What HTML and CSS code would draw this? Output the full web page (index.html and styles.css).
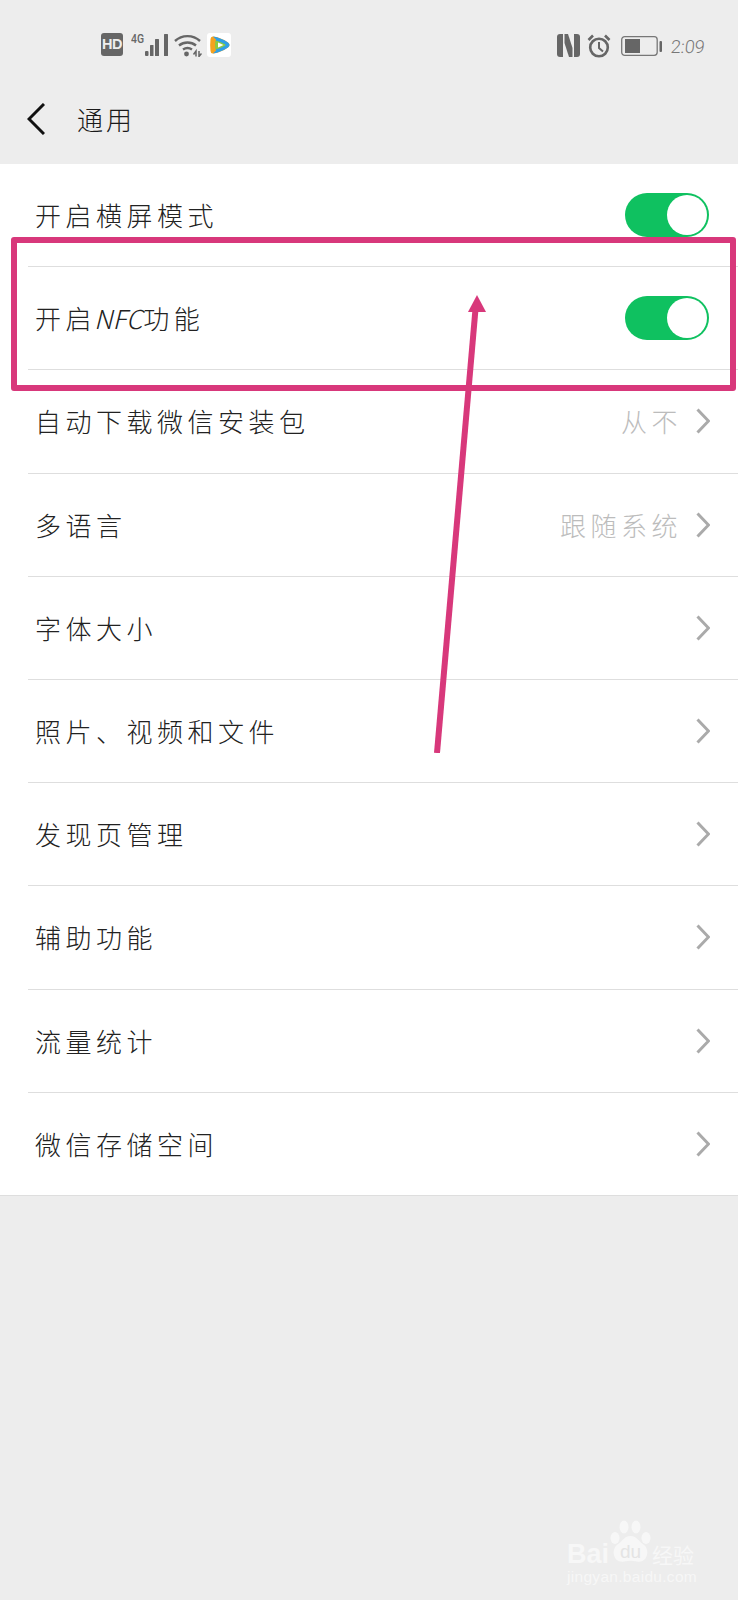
FILE: index.html
```html
<!DOCTYPE html>
<html lang="zh">
<head>
<meta charset="utf-8">
<title>通用</title>
<link rel="stylesheet" href="styles.css">
</head>
<body>
<div class="screen">
  <header class="status">
    <div class="status-left">
      <span class="hd">HD</span>
      <span class="net">4G</span>
      <svg class="ic-signal" width="24" height="23" viewBox="0 0 24 23"><g fill="#666"><rect x="0" y="17" width="3.500" height="5" rx="1"/><rect x="5" y="11" width="3.500" height="11" rx=".5"/><rect x="10" y="5" width="4" height="17" rx=".5"/><rect x="19" y="0" width="4" height="22" rx=".5"/></g></svg>
      <svg class="ic-wifi" width="28" height="23" viewBox="0 0 28 23"><g fill="none" stroke="#666" stroke-width="2.400"><path d="M1 7C8 .5 19 .5 26 7"/><path d="M5 11.500c5-4 12-4 17 0"/><path d="M9 15.500c3-2 6-2 9 0"/></g><circle cx="12.500" cy="20" r="2.400" fill="#666"/><path d="M19.500 20.500l2.500-3.500v5.500M25 17v5.500l2.500-3" fill="none" stroke="#666" stroke-width="1.500"/></svg>
      <svg class="ic-app" width="24" height="24" viewBox="0 0 24 24"><rect width="24" height="24" rx="3" fill="#fff"/><path d="M3.500 6q.2-3 3-2.500q8 1.300 14.500 6q3 2.500 0 5q-6.500 4.700-14.500 6q-2.800.5-3-2.500q-.7-6 0-12z" fill="#f4a21f"/><path d="M6 3.500q8 1.300 15 6q3 2.500 0 5q-7 4.700-15 6l3-3q-1-5.500 0-11z" fill="#2f9fe6"/><path d="M8.500 7.500q5 1.200 9 3.500q2 1 0 2q-4 2.300-9 3.500q-1-4.500 0-9z" fill="#8ccb3f"/><path d="M11 9.500l5.500 2.500-5.500 2.500z" fill="#fff"/></svg>
    </div>
    <div class="status-right">
      <svg class="ic-nfc" width="23" height="23" viewBox="0 0 23 23"><g fill="#666"><path d="M3 0h3v23H3q-3 0-3-3V3q0-3 3-3z"/><path d="M20 0h-3v23h3q3 0 3-3V3q0-3-3-3z"/><path d="M7.500 0h3.500l4.500 14v9H12L7.500 9z"/></g></svg>
      <svg class="ic-alarm" width="24" height="24" viewBox="0 0 24 24"><circle cx="12" cy="13.500" r="8.800" fill="none" stroke="#666" stroke-width="2.600"/><path d="M12 8v6l4 3.500" fill="none" stroke="#666" stroke-width="2"/><path d="M1.500 6L6 1.500M22.500 6L18 1.500" stroke="#666" stroke-width="2.600"/></svg>
      <svg class="ic-batt" width="41" height="20" viewBox="0 0 41 20"><rect x=".7" y=".7" width="35.500" height="18.600" rx="3" fill="none" stroke="#777" stroke-width="1.300"/><rect x="4" y="3" width="15" height="14" fill="#666"/><rect x="38.500" y="5" width="2.500" height="11" rx="1" fill="#666"/></svg>
      <span class="time">2:09</span>
    </div>
  </header>

  <nav class="nav">
    <svg class="back" width="18" height="32" viewBox="0 0 18 32"><path d="M17 1L2 16l15 15" fill="none" stroke="#111" stroke-width="3"/></svg>
    <h1 class="title">通用</h1>
  </nav>

  <ul class="list">
    <li class="row"><span class="label">开启横屏模式</span><span class="switch"><span class="knob"></span></span></li>
    <li class="row"><span class="label">开启<span class="latin">NFC</span>功能</span><span class="switch"><span class="knob"></span></span></li>
    <li class="row"><span class="label">自动下载微信安装包</span><span class="value">从不</span><svg class="chev" width="14" height="26" viewBox="0 0 14 26"><path d="M1.500 1.500L12.500 13 1.500 24.500" fill="none" stroke="#aaa" stroke-width="3"/></svg></li>
    <li class="row"><span class="label">多语言</span><span class="value">跟随系统</span><svg class="chev" width="14" height="26" viewBox="0 0 14 26"><path d="M1.500 1.500L12.500 13 1.500 24.500" fill="none" stroke="#aaa" stroke-width="3"/></svg></li>
    <li class="row"><span class="label">字体大小</span><svg class="chev" width="14" height="26" viewBox="0 0 14 26"><path d="M1.500 1.500L12.500 13 1.500 24.500" fill="none" stroke="#aaa" stroke-width="3"/></svg></li>
    <li class="row"><span class="label">照片、视频和文件</span><svg class="chev" width="14" height="26" viewBox="0 0 14 26"><path d="M1.500 1.500L12.500 13 1.500 24.500" fill="none" stroke="#aaa" stroke-width="3"/></svg></li>
    <li class="row"><span class="label">发现页管理</span><svg class="chev" width="14" height="26" viewBox="0 0 14 26"><path d="M1.500 1.500L12.500 13 1.500 24.500" fill="none" stroke="#aaa" stroke-width="3"/></svg></li>
    <li class="row"><span class="label">辅助功能</span><svg class="chev" width="14" height="26" viewBox="0 0 14 26"><path d="M1.500 1.500L12.500 13 1.500 24.500" fill="none" stroke="#aaa" stroke-width="3"/></svg></li>
    <li class="row"><span class="label">流量统计</span><svg class="chev" width="14" height="26" viewBox="0 0 14 26"><path d="M1.500 1.500L12.500 13 1.500 24.500" fill="none" stroke="#aaa" stroke-width="3"/></svg></li>
    <li class="row"><span class="label">微信存储空间</span><svg class="chev" width="14" height="26" viewBox="0 0 14 26"><path d="M1.500 1.500L12.500 13 1.500 24.500" fill="none" stroke="#aaa" stroke-width="3"/></svg></li>
  </ul>

  <div class="highlight"></div>
  <svg class="arrow" width="60" height="458" viewBox="0 0 60 458"><path d="M7 458L45.500 14" stroke="#d8387b" stroke-width="6" fill="none"/><path d="M47 0l9 17H38z" fill="#d8387b"/></svg>

  <div class="mark">
    <div class="mark-top">
      <span class="mark-bai">Bai</span>
      <span class="mark-du">
        <svg class="paw" width="42" height="46" viewBox="0 0 42 46"><g fill="#f7f7f7"><ellipse cx="5" cy="18" rx="4.500" ry="6"/><ellipse cx="14" cy="7" rx="4.500" ry="6.500"/><ellipse cx="26" cy="7" rx="4.500" ry="6.500"/><ellipse cx="36" cy="18" rx="4.500" ry="6"/><path d="M20.500 16c6 0 8 5 13 8.500 7 5 4 19-6.500 17-4-1-9-1-13 0C3.500 43.500 .5 29.500 7.500 24.500c5-3.500 7-8.500 13-8.500z"/></g></svg>
        <span class="mark-du-text">du</span>
      </span>
      <span class="mark-jy">经验</span>
    </div>
    <div class="mark-url">jingyan.baidu.com</div>
  </div>
</div>
</body>
</html>
```

FILE: styles.css
```css
* { box-sizing: border-box; }
html, body { margin: 0; padding: 0; }
body { background: #ededed; font-family: "Noto Sans CJK SC", "Noto Sans", sans-serif; }

.screen { position: relative; width: 738px; height: 1600px; overflow: hidden; background: #ededed; }

.status { height: 74px; padding: 33px 35px 0 101px; display: flex; justify-content: space-between; align-items: flex-start; }
.status-left, .status-right { display: flex; align-items: flex-start; }
.status svg { display: block; flex: none; }
.hd { width: 22px; height: 23px; border-radius: 3px; background: #666; color: #eee; font: 700 14.500px/23px "Liberation Sans", sans-serif; text-align: center; letter-spacing: -.5px; }
.net { width: 14px; margin-left: 8px; font: 500 13px/12px "Roboto", sans-serif; color: #666; transform: scaleX(.8); transform-origin: left top; white-space: nowrap; }
.ic-signal { margin: 1px 0 0 0; }
.ic-wifi { margin: 1px 0 0 5px; }
.ic-app { margin-left: 5px; }
.status-right { padding-top: 1px; }
.ic-alarm { margin-left: 7px; }
.ic-batt { margin: 2px 0 0 10px; }
.time { margin: 2px 0 0 9px; width: 32px; font: 300 18px/22px "Roboto", sans-serif; color: #777; white-space: nowrap; transform: skewX(-6deg); }

.nav { height: 90px; padding-left: 27px; display: flex; align-items: center; }
.back { display: block; }
.title { margin: 0 0 0 32px; font-size: 26px; font-weight: 300; line-height: 32px; letter-spacing: 3px; color: #1a1a1a; }

.list { margin: 0; padding: 0; list-style: none; background: #fff; }
.row { height: 103.2px; margin-left: 28px; padding: 0 28px 0 7px; display: flex; align-items: center; border-bottom: 1px solid #dedede; }
.row:last-child { margin-left: 0; padding-left: 35px; }
.label { flex: 1; font-size: 26px; font-weight: 300; letter-spacing: 4.500px; color: #222; line-height: 34px; }
.latin { font-style: italic; letter-spacing: 0; margin: 0 1px 0 -2px; }
.value { font-size: 26px; font-weight: 300; letter-spacing: 4.500px; color: #bcbcbc; line-height: 34px; margin-right: 14px; }
.chev { display: block; flex: none; }

.switch { width: 84px; height: 44px; border-radius: 22px; background: #0fc160; display: flex; justify-content: flex-end; align-items: center; padding-right: 2px; margin-right: 1px; }
.knob { width: 40px; height: 40px; border-radius: 50%; background: #fff; }

.highlight { position: absolute; left: 11px; top: 237px; width: 725px; height: 154px; border: 6px solid #d8387b; border-radius: 3px; }
.arrow { position: absolute; left: 430px; top: 295px; }

.mark { position: absolute; left: 567px; top: 1520px; width: 134px; color: #f7f7f7; font-family: "Liberation Sans", sans-serif; white-space: nowrap; }
.mark-top { display: flex; align-items: flex-end; height: 46px; }
.mark-bai { flex: none; width: 43px; font-size: 27px; line-height: 24px; font-weight: 700; }
.mark-du { flex: none; position: relative; width: 42px; height: 46px; }
.paw { display: block; position: absolute; left: 0; top: 0; }
.mark-du-text { position: absolute; left: 10px; bottom: 5px; font-size: 19px; line-height: 18px; font-weight: 400; color: #e4e4e4; }
.mark-jy { flex: none; font-family: "Noto Sans CJK SC", sans-serif; font-size: 21px; line-height: 24px; }
.mark-url { margin-top: 2px; font-size: 15.500px; line-height: 18px; letter-spacing: .3px; }
```
